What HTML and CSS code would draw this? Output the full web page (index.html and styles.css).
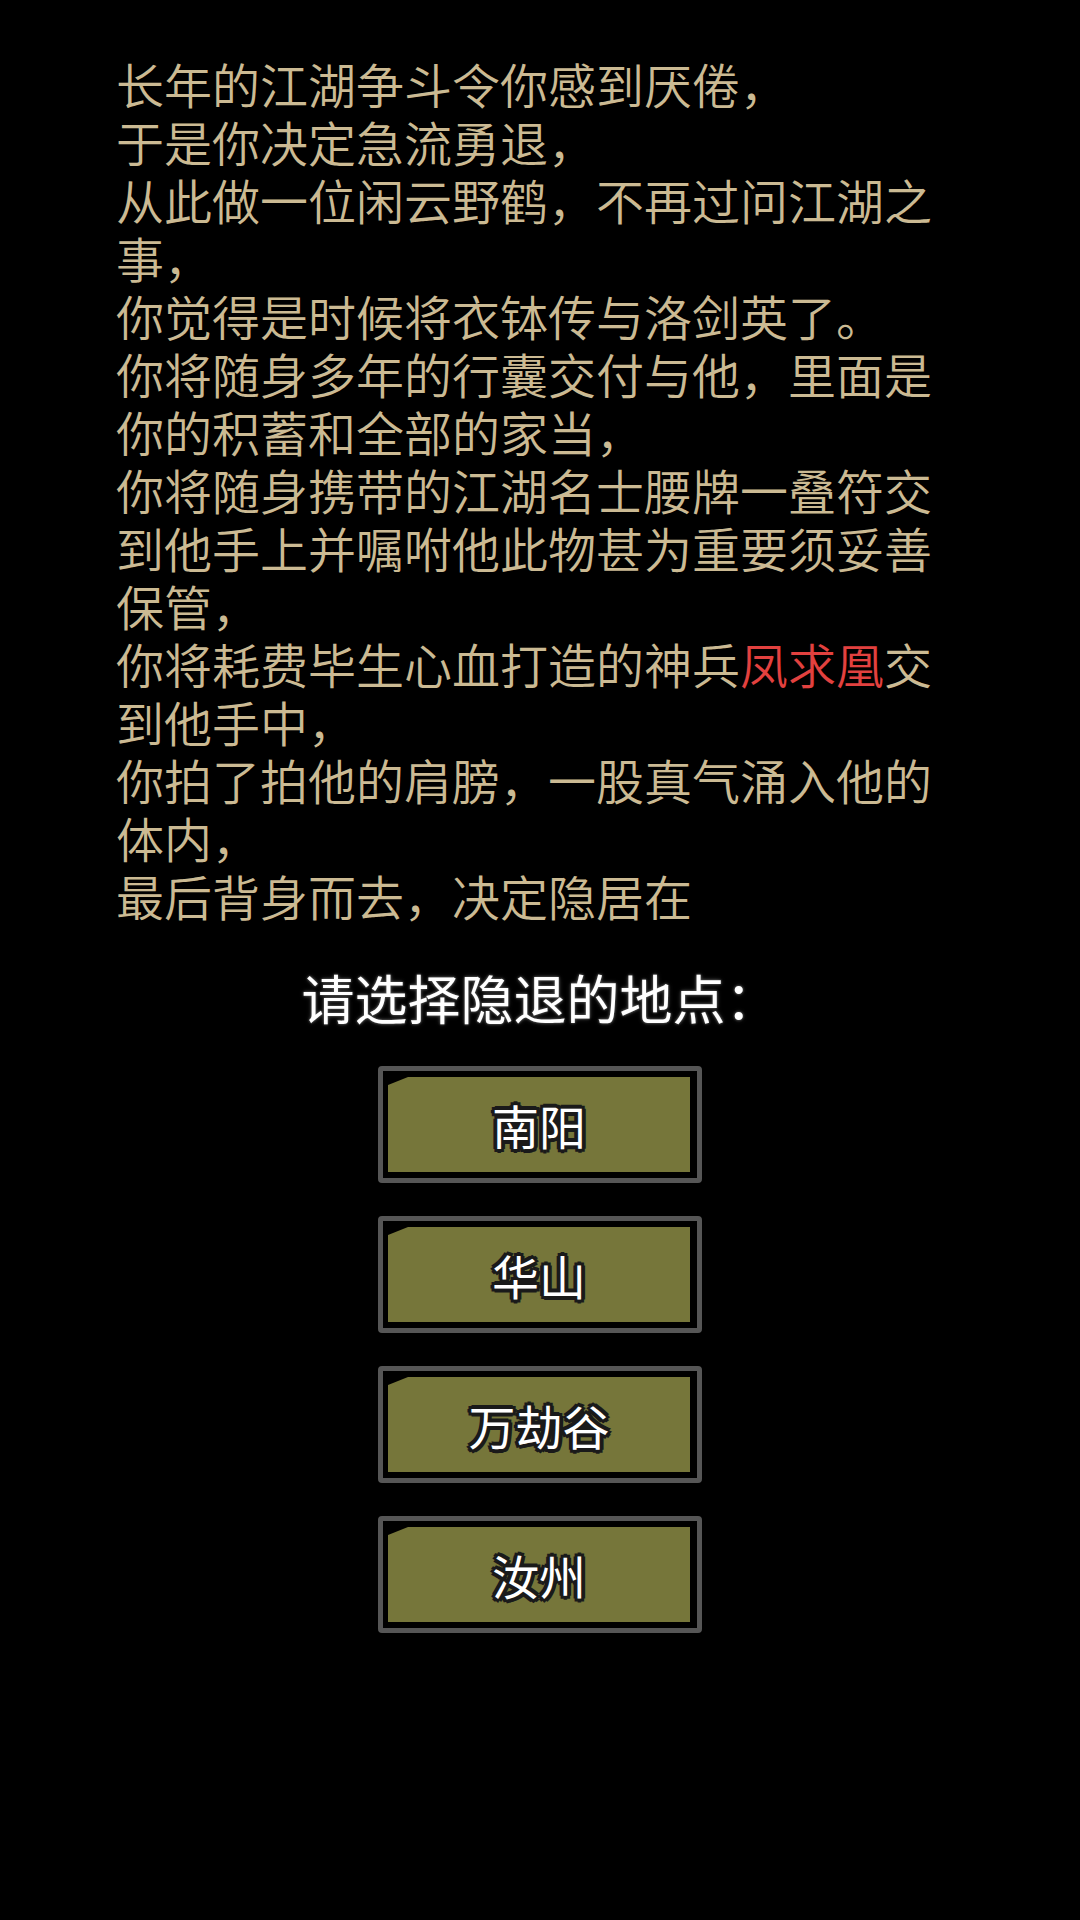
FILE: index.html
```html
<!DOCTYPE html>
<html lang="zh-CN">
<head>
  <meta charset="UTF-8">
  <title>归隐</title>
  <link rel="stylesheet" href="styles.css">
</head>
<body>

  <!-- Story text -->
  <div class="story">
    <p>长年的江湖争斗令你感到厌倦，</p>
    <p>于是你决定急流勇退，</p>
    <p>从此做一位闲云野鹤，不再过问江湖之事，</p>
    <p>你觉得是时候将衣钵传与洛剑英了。</p>
    <p>你将随身多年的行囊交付与他，里面是你的积蓄和全部的家当，</p>
    <p>你将随身携带的江湖名士腰牌一叠符交到他手上并嘱咐他此物甚为重要须妥善保管，</p>
    <p>你将耗费毕生心血打造的神兵<span class="item">凤求凰</span>交到他手中，</p>
    <p>你拍了拍他的肩膀，一股真气涌入他的体内，</p>
    <p>最后背身而去，决定隐居在</p>
  </div>

  <h2 class="prompt">请选择隐退的地点：</h2>

  <!-- Location choices -->
  <div class="choices">
    <button class="choice"><span class="choice-face">南阳</span></button>
    <button class="choice"><span class="choice-face">华山</span></button>
    <button class="choice"><span class="choice-face">万劫谷</span></button>
    <button class="choice"><span class="choice-face">汝州</span></button>
  </div>

</body>
</html>
```

FILE: styles.css
```css
body {
  margin: 0;
  background-color: #000;
  font-family: "Noto Sans CJK SC", "Noto Sans", sans-serif;
  height: 1920px;
}

.story {
  width: 848px;
  margin: 54px auto 0;
  color: #cbba93;
  font-size: 48px;
  font-weight: 350;
  line-height: 58px;
}

.story p {
  margin: 0;
}

.item {
  color: #e2413f;
}

.prompt {
  margin: 41px 0 0;
  text-align: center;
  font-size: 53px;
  line-height: 64px;
  font-weight: normal;
  color: #fff;
  text-shadow:
    0 0 2px #555,
    0 0 3px #4a4a4a,
    0 0 5px #3a3a3a;
}

.choices {
  margin-top: 37px;
  display: flex;
  flex-direction: column;
  align-items: center;
  gap: 33px;
}

.choice {
  width: 324px;
  height: 117px;
  padding: 6px 7px 6px 5px;
  box-sizing: border-box;
  background: #000;
  border: 5px solid #565656;
  border-radius: 4px;
  font-family: inherit;
  cursor: pointer;
  display: flex;
}

.choice-face {
  flex: 1;
  display: flex;
  align-items: center;
  justify-content: center;
  background: #76763a;
  clip-path: polygon(0 8px, 20px 0, 100% 0, 100% 100%, 0 100%);
  color: #fff;
  font-size: 47px;
  text-shadow:
    -3px -3px 0 #1a1a1a, 3px -3px 0 #1a1a1a,
    -3px 3px 0 #1a1a1a, 3px 3px 0 #1a1a1a,
    0 -4px 0 #1a1a1a, 0 4px 0 #1a1a1a,
    -4px 0 0 #1a1a1a, 4px 0 0 #1a1a1a;
}

.choice:hover .choice-face {
  background: #85853f;
}
```
